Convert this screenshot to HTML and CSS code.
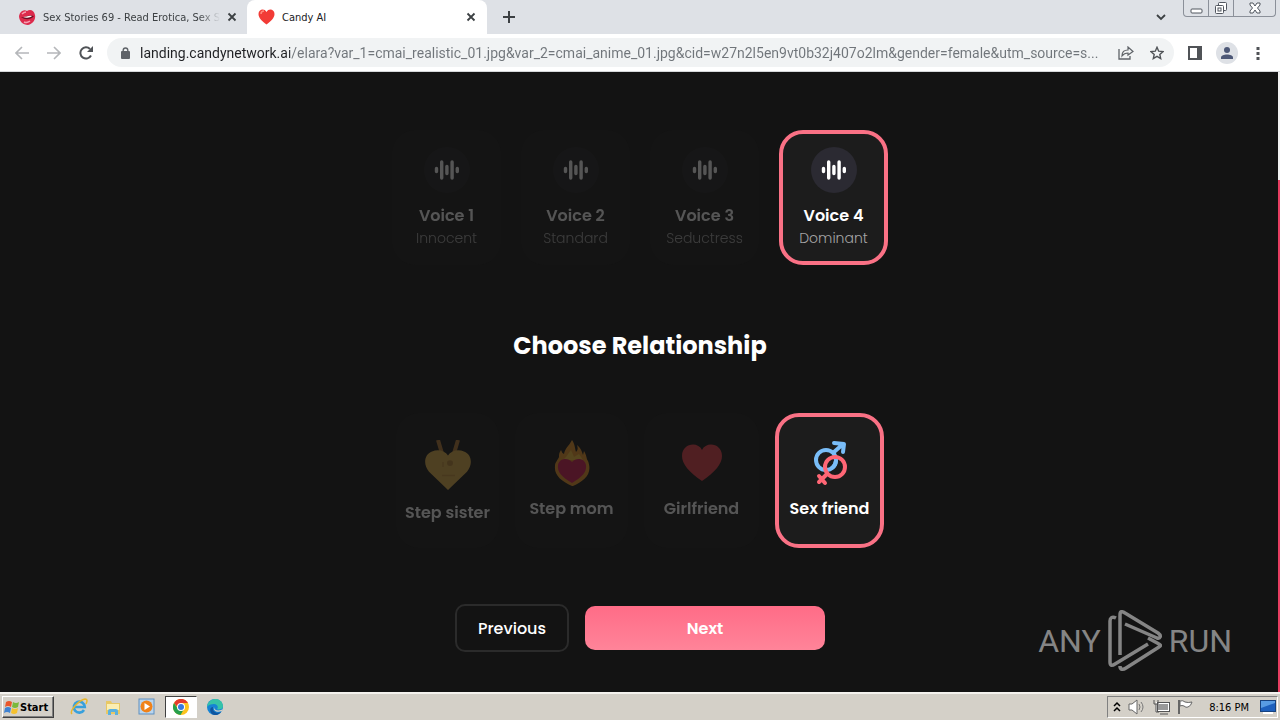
FILE: index.html
```html
<!DOCTYPE html>
<html lang="en">
<head>
    <meta charset="UTF-8">
    <title>Candy AI</title>
    <link rel="stylesheet" href="styles.css">
</head>
<body>
    <svg class="defs" aria-hidden="true">
        <symbol id="wave" viewBox="0 0 26 22">
            <g stroke="currentColor" stroke-width="3.4" stroke-linecap="round">
                <path d="M2.5 9.5v3M7.7 3v16M12.9 7.5v7M18.1 3v16M23.3 9.5v3"/>
            </g>
        </symbol>
        <symbol id="close" viewBox="0 0 10 10">
            <path d="M1.5 1.5l7 7M8.5 1.5l-7 7" stroke="#3c4043" stroke-width="1.8"/>
        </symbol>
    </svg>

    <header class="browser">
        <div class="tabs">
            <div class="tab">
                <svg width="17" height="16" viewBox="0 0 17 16">
                    <path d="M0 7C1 2 5 0 8 2c3-2 7-1 8 4 1 4-2 9-7 10C4 16 0 12 0 7z" fill="#dc2a4c"/>
                    <path d="M2 8c4 1 8-3 13-1-2 3-8 5-13 1z" fill="#6d0c22"/>
                    <path d="M4 8c3 0 6-2 9-1-2 2-6 2-9 1z" fill="#fff"/>
                    <path d="M3 5c1-1 2-2 4-2M5 13c2 1 5 0 6-1" stroke="#f79db0" stroke-width="1.500" fill="none"/>
                </svg>
                <span class="tab-title fade">Sex Stories 69 - Read Erotica, Sex S</span>
                <button class="icon-btn" aria-label="Close tab"><svg width="10" height="10"><use href="#close"/></svg></button>
            </div>
            <div class="tab active">
                <svg width="17" height="16" viewBox="0 0 17 16">
                    <path d="M8.500 15.500C4 12 .5 9 .5 5 .5 0 6.500-1 8.500 3c2-4 8-3 8 2 0 4-3.500 7-8 10.500z" fill="#f23b36"/>
                    <path d="M3 5c0-2 1-3 3-3" stroke="#ff8a7c" stroke-width="1.500" fill="none"/>
                </svg>
                <span class="tab-title">Candy AI</span>
                <button class="icon-btn" aria-label="Close tab"><svg width="10" height="10"><use href="#close"/></svg></button>
            </div>
            <button class="icon-btn new-tab" aria-label="New tab">
                <svg width="12" height="12" viewBox="0 0 12 12"><path d="M6 0v12M0 6h12" stroke="#3c4043" stroke-width="2"/></svg>
            </button>
            <button class="icon-btn search-tabs" aria-label="Search tabs">
                <svg width="10" height="7" viewBox="0 0 10 7"><path d="M1 1l4 4 4-4" stroke="#3c4043" stroke-width="1.800" fill="none"/></svg>
            </button>
            <div class="window-buttons">
                <button aria-label="Minimize"><svg width="13" height="16" viewBox="0 0 13 16"><rect x="1" y="9" width="11" height="4" rx="1" fill="#fff" stroke="#51565f"/></svg></button>
                <button aria-label="Restore"><svg width="14" height="16" viewBox="0 0 14 16"><g fill="#fff" stroke="#51565f"><rect x="4.500" y="2.500" width="8" height="8" rx="1"/><rect x="1.500" y="5.500" width="8" height="8" rx="1"/><rect x="4" y="8" width="3" height="3"/></g></svg></button>
                <button class="wide" aria-label="Close"><svg width="12" height="16" viewBox="0 0 12 16"><path d="M1 3h3l2 3 2-3h3v2L8.500 8 11 11v2H8l-2-3-2 3H1v-2l2.500-3L1 5z" fill="#fff" stroke="#51565f"/></svg></button>
            </div>
        </div>

        <div class="toolbar">
            <div class="nav">
                <button class="icon-btn" aria-label="Back"><svg width="14" height="14" viewBox="0 0 14 14"><path d="M14 7H1.500M7 1L1 7l6 6" stroke="#b5b7ba" stroke-width="1.600" fill="none"/></svg></button>
                <button class="icon-btn" aria-label="Forward"><svg width="14" height="14" viewBox="0 0 14 14"><path d="M0 7h12.500M7 1l6 6-6 6" stroke="#b5b7ba" stroke-width="1.600" fill="none"/></svg></button>
                <button class="icon-btn" aria-label="Reload"><svg width="14" height="14" viewBox="0 0 14 14"><path d="M12 9.500A5.600 5.600 0 1 1 11 3" stroke="#505357" stroke-width="2" fill="none"/><path d="M14 0v6H8z" fill="#505357"/></svg></button>
            </div>
            <div class="address">
                <svg width="9" height="12" viewBox="0 0 9 12"><path d="M2.200 5V3.300a2.300 2.300 0 0 1 4.600 0V5" stroke="#5f6368" stroke-width="1.400" fill="none"/><rect y="4" width="9" height="8" rx="1" fill="#5f6368"/></svg>
                <input type="text" class="url" aria-label="Address" value="landing.candynetwork.ai/elara?var_1=cmai_realistic_01.jpg&amp;var_2=cmai_anime_01.jpg&amp;cid=w27n2l5en9vt0b32j407o2lm&amp;gender=female&amp;utm_source=s...">
                <div class="address-actions">
                    <button class="icon-btn" aria-label="Share"><svg width="16" height="14" viewBox="0 0 16 14"><path d="M1 3v10h11v-3" stroke="#5f6368" stroke-width="1.300" fill="none"/><path d="M4 10c0-4 2-6 6-6V1l5 4.500L10 9V7C7 7 5.500 8 4 10z" stroke="#5f6368" stroke-width="1.200" fill="none"/></svg></button>
                    <button class="icon-btn" aria-label="Bookmark"><svg width="14" height="14" viewBox="0 0 14 14"><path d="M7 1.300l1.700 3.900 4.300.4-3.200 2.800.9 4.200L7 10.400l-3.700 2.200.9-4.200L1 5.600l4.300-.4z" stroke="#505357" stroke-width="1.400" fill="none"/></svg></button>
                </div>
            </div>
            <button class="icon-btn" aria-label="Side panel"><svg width="14" height="14" viewBox="0 0 14 14"><path d="M1 1h12v12H1z" stroke="#505357" stroke-width="2" fill="none"/><path d="M9 1h4v12H9z" fill="#505357"/></svg></button>
            <button class="icon-btn" aria-label="Profile"><svg width="22" height="22" viewBox="0 0 22 22"><circle cx="11" cy="11" r="11" fill="#dee1e6"/><circle cx="11" cy="8" r="3" fill="#4c5776"/><path d="M5 17v-1.500c0-4 12-4 12 0V17z" fill="#4c5776"/></svg></button>
            <button class="icon-btn menu" aria-label="Menu"><svg width="4" height="14" viewBox="0 0 4 14"><path d="M.5 1h3v3h-3zM.5 6h3v3h-3zM.5 11h3v3h-3z" fill="#505357"/></svg></button>
        </div>
    </header>

    <main class="page">
        <div class="cards voices">
            <button class="card">
                <span class="circle"><svg width="26" height="22"><use href="#wave"/></svg></span>
                <span class="label">Voice 1</span>
                <span class="sub">Innocent</span>
            </button>
            <button class="card">
                <span class="circle"><svg width="26" height="22"><use href="#wave"/></svg></span>
                <span class="label">Voice 2</span>
                <span class="sub">Standard</span>
            </button>
            <button class="card">
                <span class="circle"><svg width="26" height="22"><use href="#wave"/></svg></span>
                <span class="label">Voice 3</span>
                <span class="sub">Seductress</span>
            </button>
            <button class="card selected" aria-pressed="true">
                <span class="circle"><svg width="26" height="22"><use href="#wave"/></svg></span>
                <span class="label">Voice 4</span>
                <span class="sub">Dominant</span>
            </button>
        </div>

        <h1>Choose Relationship</h1>

        <div class="cards relations">
            <button class="card">
                <svg width="46" height="50" viewBox="0 0 46 52" preserveAspectRatio="none">
                    <path d="M13 0l4 14M33 0l-4 14" stroke="#b97c36" stroke-width="4"/>
                    <path d="M23 52L4 33C-2 26-1 15 7 12c6-3 13-1 16 4 3-5 10-7 16-4 8 3 9 14 3 21z" fill="#e6b34a"/>
                    <path d="M18 23v5M17 37h13" stroke="#d09a3c" stroke-width="1.500" fill="none"/>
                    <circle cx="25" cy="24" r="3" fill="#c08a35"/>
                </svg>
                <span class="label">Step sister</span>
            </button>
            <button class="card">
                <svg width="36" height="46" viewBox="0 0 36 46">
                    <path d="M18 46C7 41 0 35 1 26c0-4 3-6 4-9 0-3 0-4 2-7 1 2 1 3 3 4 1-6 5-8 8-14 3 4 3 9 4 12 2-2 2-4 1-7 4 3 5 7 6 10l1-4c3 5 2 7 4 10 5 13-4 20-15 25z" fill="#f09a27"/>
                    <path d="M12 17l5-7 3 7 5-3 4 6H9z" fill="#ffc63c"/>
                    <path d="M18 43C8 37 3 32 4 25c1-7 10-8 14-3 4-5 13-4 14 3 1 7-4 12-14 18z" fill="#dc1c55"/>
                </svg>
                <span class="label">Step mom</span>
            </button>
            <button class="card girlfriend">
                <svg width="40" height="38" viewBox="0 0 40 38">
                    <path d="M20 37C7 28 0 20 0 12 0-1 16-3 20 6c4-9 20-7 20 6 0 8-7 16-20 25z" fill="#ed3e49"/>
                </svg>
                <span class="label">Girlfriend</span>
            </button>
            <button class="card selected" aria-pressed="true">
                <svg width="36" height="46" viewBox="0 0 36 46">
                    <g fill="none" stroke-width="4" stroke-linecap="round" stroke-linejoin="round">
                        <circle cx="14" cy="20" r="10" stroke="#79bdf8"/>
                        <path d="M22 12l8-7M22 3l10 1-1 8" stroke="#79bdf8"/>
                        <circle cx="23" cy="27" r="10" stroke="#ff6675"/>
                        <path d="M15 34l-8 8M7 36l6 7" stroke="#ff6675"/>
                        <path d="M24 21a10 10 0 0 1-4 7" stroke="#79bdf8"/>
                    </g>
                </svg>
                <span class="label">Sex friend</span>
            </button>
        </div>

        <div class="actions">
            <button class="previous">Previous</button>
            <button class="next">Next</button>
        </div>

        <div class="watermark">
            <span>ANY</span>
            <svg width="54" height="62" viewBox="0 0 54 62">
                <g fill="none" stroke="currentColor" stroke-width="3.500" stroke-linejoin="round">
                    <path d="M8 8c-4-2-6 0-6 3v41c0 4 2 4 5 2l33-20"/>
                    <path d="M12 45V5c0-4 2-4 5-2l33 20c4 3 2 6-1 5L17 14"/>
                    <path d="M40 28l11 6c2 1 2 2 0 3L18 58c-3 2-6 2-6-2"/>
                </g>
            </svg>
            <span>RUN</span>
        </div>
        <div class="scrollbar"><div class="thumb"></div></div>
    </main>

    <footer class="taskbar">
        <button class="start">
            <svg width="16" height="16" viewBox="0 0 16 16"><path d="M2 3q3-2 6 0L7 8Q4 6 1 8z" fill="#e9572b"/><path d="M9 3q3 2 6 0l-1 5q-3 2-6 0z" fill="#7bb93c"/><path d="M1 9q3-2 6 0l-1 5q-3-2-6 0z" fill="#3f82d1"/><path d="M8 9q3 2 6 0l-1 5q-3 2-6 0z" fill="#f5c12e"/></svg>
            Start
        </button>
        <div class="apps">
            <button aria-label="Internet Explorer"><svg width="18" height="18" viewBox="0 0 18 18"><path d="M14 12a5.500 5.500 0 1 1 .8-3H5" stroke="#38a0dc" stroke-width="2.600" fill="none"/><path d="M2 16C-1 13 9 2 15 1c3 0 2 3 1 5" stroke="#e8b62c" stroke-width="1.500" fill="none"/></svg></button>
            <button aria-label="Explorer"><svg width="18" height="18" viewBox="0 0 18 18"><path d="M2 3h5l1 2h8v11H2z" fill="#e8c865"/><path d="M3 6h12v6H3z" fill="#fbeeb2"/><path d="M4 17v-4q0-2 2-2h6q2 0 2 2v4h-3v-3H7v3z" fill="#5bb1de"/></svg></button>
            <button aria-label="Media Player"><svg width="18" height="18" viewBox="0 0 18 18"><rect x="1" y="1" width="15" height="15" fill="#b9d5ee" stroke="#5e90c0"/><circle cx="8.500" cy="8.500" r="6" fill="#f08219"/><path d="M6.500 5v7l5.500-3.500z" fill="#fff"/></svg></button>
            <button class="running" aria-label="Chrome"><svg width="16" height="16" viewBox="0 0 16 16"><circle cx="8" cy="8" r="8" fill="#fcc31e"/><path d="M1 4a8 8 0 0 1 14 0H8v4H4.500z" fill="#e33b2e"/><path d="M1 4a8 8 0 0 0 6.500 12L11 10H5z" fill="#269f4c"/><circle cx="8" cy="8" r="4" fill="#fff"/><circle cx="8" cy="8" r="3" fill="#3679e0"/></svg></button>
            <button aria-label="Edge"><svg width="16" height="16" viewBox="0 0 16 16"><circle cx="8" cy="8" r="8" fill="#1684d4"/><path d="M0 8C1-2 15-3 16 7c0 4-5 4-6 3 2-2 0-5-3-5S1 6 0 8z" fill="#36c3a8"/><path d="M6 8c-1 5 4 7 8 5-2 3-6 4-9 2-3-3-2-7 1-7z" fill="#10559f"/><path d="M7 8c0 3 3 4 7 3l2-1-1 2c-5 2-9 0-8-4z" fill="#d4d0c8"/></svg></button>
        </div>
        <div class="tray">
            <svg width="8" height="12" viewBox="0 0 8 12"><path d="M1 5l3-3 3 3M1 10l3-3 3 3" stroke="#000" stroke-width="1.500" fill="none"/></svg>
            <svg width="18" height="16" viewBox="0 0 18 16"><path d="M1 5h3l5-4v14l-5-4H1z" fill="#fff" stroke="#666"/><path d="M11 5q2 3 0 6M13 3q4 5 0 10" stroke="#777" fill="none"/></svg>
            <svg width="17" height="16" viewBox="0 0 17 16"><rect x="4" y="4" width="12" height="8" fill="#999" stroke="#fff" stroke-width="2"/><rect x="4.500" y="3.500" width="12" height="9" fill="none" stroke="#555"/><path d="M7 15h8M1 1v4h4V1M3 5v8h3" stroke="#555" fill="none"/></svg>
            <svg width="17" height="16" viewBox="0 0 17 16"><path d="M2 1v14" stroke="#666" stroke-width="2"/><path d="M3 2q3-1 5 1 3 1 7 0-1 4-4 5-2 1-4-1-2-1-4 0z" fill="#fff" stroke="#666"/></svg>
            <time>8:16 PM</time>
            <svg width="16" height="14" viewBox="0 0 16 14"><rect x=".5" y=".5" width="15" height="11" fill="#1d60bd" stroke="#16427f"/><path d="M1 1h14v2L1 8z" fill="#589ce3"/><path d="M3 13h10" stroke="#fff" stroke-width="2"/></svg>
        </div>
    </footer>
</body>
</html>
```
FILE: styles.css
```css
* {
    box-sizing: border-box;
}
body {
    margin: 0;
    height: 100vh;
    display: flex;
    flex-direction: column;
    background: #131313;
    font-family: "Noto Sans", sans-serif;
    overflow: hidden;
}
button {
    font: inherit;
    color: inherit;
    padding: 0;
    border: none;
    background: none;
    cursor: pointer;
}
svg {
    display: block;
    flex-shrink: 0;
}
.defs {
    position: absolute;
    width: 0;
    height: 0;
}
.icon-btn {
    display: flex;
    align-items: center;
    justify-content: center;
    flex-shrink: 0;
}

/* browser window */
.browser {
    flex-shrink: 0;
    background: #fff;
    border-bottom: 1px solid #d5d7da;
}
.tabs {
    display: flex;
    height: 34px;
    background: #dee1e6;
}
.tab {
    display: flex;
    align-items: center;
    gap: 7px;
    width: 247px;
    padding: 0 10px 0 19px;
    color: #3c4043;
}
.tab.active {
    width: 240px;
    padding: 0 11px;
    background: #fff;
    border-radius: 8px 8px 0 0;
    color: #202124;
}
.tab-title {
    flex: 1;
    min-width: 0;
    overflow: hidden;
    white-space: nowrap;
    font-family: "DejaVu Sans Condensed", "Noto Sans", sans-serif;
    font-size: 11px;
}
.fade {
    mask-image: linear-gradient(to right, #000 88%, transparent);
}
.new-tab {
    width: 44px;
}
.search-tabs {
    width: 30px;
    margin-left: auto;
}
.window-buttons {
    display: flex;
    height: 17px;
    margin: 0 4px 0 7px;
    border: 1px solid #8b9099;
    border-top: none;
    border-radius: 0 0 4px 4px;
}
.window-buttons button {
    display: flex;
    justify-content: center;
    width: 25px;
    border-right: 1px solid #8b9099;
}
.window-buttons .wide {
    width: 41px;
    border-right: none;
}
.toolbar {
    display: flex;
    align-items: center;
    gap: 14px;
    height: 37px;
    padding: 0 20px 0 15px;
}
.nav {
    display: flex;
    gap: 18px;
}
.menu {
    margin-left: 4px;
}
.address {
    flex: 1;
    display: flex;
    align-items: center;
    gap: 10px;
    min-width: 0;
    height: 29px;
    padding: 0 10px 0 14px;
    border-radius: 15px;
    background: #f1f3f4;
}
.address-actions {
    display: flex;
    gap: 16px;
}
.url {
    flex: 1;
    min-width: 0;
    padding: 0;
    border: none;
    outline: none;
    font-family: Roboto, "Noto Sans", sans-serif;
    font-size: 14px;
    color: transparent;
    background: linear-gradient(to right, #202124 150px, #70757a 150px) text;
}

/* landing page */
.page {
    position: relative;
    flex: 1;
    display: flex;
    flex-direction: column;
    align-items: center;
    padding-top: 58px;
    font-family: Poppins, Inter, sans-serif;
    color: #fff;
}
.cards {
    display: grid;
}
.voices {
    grid-template-columns: repeat(4, 109px);
    gap: 20px;
}
.relations {
    grid-template-columns: 103px 113px 115px 109px;
    gap: 16px;
}
.card {
    display: flex;
    flex-direction: column;
    align-items: center;
    height: 135px;
    padding-top: 17px;
    border-radius: 24px;
    background: #181818;
    opacity: 0.28;
}
.card.selected {
    padding-top: 13px;
    border: 4px solid #fa7185;
    background: #1c1c1c;
    opacity: 1;
}
.circle {
    display: grid;
    place-items: center;
    width: 46px;
    height: 46px;
    border-radius: 50%;
    background: #212123;
}
.selected .circle {
    background: #2b2a32;
}
.label {
    margin-top: 11px;
    font-size: 16px;
    font-weight: 600;
    line-height: 24px;
    white-space: nowrap;
}
.sub {
    font-size: 14px;
    font-weight: 300;
    line-height: 20px;
    color: #a5a5a5;
}
.relations .card {
    padding-top: 27px;
}
.relations .selected {
    padding-top: 23px;
}
.relations .girlfriend svg {
    margin: 4px 0;
}
h1 {
    margin: 63px 0 49px;
    font-size: 24px;
    font-weight: 700;
    line-height: 36px;
}
.actions {
    display: flex;
    align-items: center;
    gap: 16px;
    margin-top: 56px;
    font-size: 16px;
    font-weight: 500;
}
.previous {
    width: 114px;
    height: 48px;
    border: 2px solid #2b2b2b;
    border-radius: 10px;
}
.next {
    width: 240px;
    height: 44px;
    border-radius: 10px;
    background: linear-gradient(#ff6c87, #ff8499);
    font-weight: 600;
}
.watermark {
    position: absolute;
    right: 48px;
    bottom: 20px;
    display: flex;
    align-items: center;
    gap: 7px;
    font-family: Roboto, "Liberation Sans", sans-serif;
    font-size: 32px;
    color: #858585;
}
.scrollbar {
    position: absolute;
    top: 0;
    right: 0;
    bottom: 0;
    width: 2px;
    padding-top: 108px;
    background: #f1f1f1;
}
.thumb {
    height: 100%;
    background: #e83e62;
}

/* desktop taskbar */
.taskbar {
    flex-shrink: 0;
    display: flex;
    align-items: center;
    height: 28px;
    padding: 0 2px;
    border-top: 2px solid #f4f2ee;
    background: #d4d0c8;
    font-family: "DejaVu Sans Condensed", "Noto Sans", sans-serif;
    font-size: 11px;
}
.start {
    display: flex;
    align-items: center;
    width: 52px;
    height: 22px;
    padding-left: 1px;
    border: 1px solid;
    border-color: #fff #404040 #404040 #fff;
    box-shadow: inset -1px -1px #808080;
    font-weight: 700;
}
.apps {
    display: flex;
    margin-left: 9px;
    gap: 2px;
}
.apps button {
    display: grid;
    place-items: center;
    width: 32px;
    height: 22px;
}
.apps .running {
    border: 1px solid;
    border-color: #404040 #fff #fff #404040;
    background: #fff;
}
.tray {
    display: flex;
    align-items: center;
    gap: 7px;
    height: 22px;
    margin-left: auto;
    padding: 0 1px 0 5px;
    border: 1px solid;
    border-color: #808080 #fff #fff #808080;
}
.tray time {
    margin: 0 4px 0 8px;
}
```
